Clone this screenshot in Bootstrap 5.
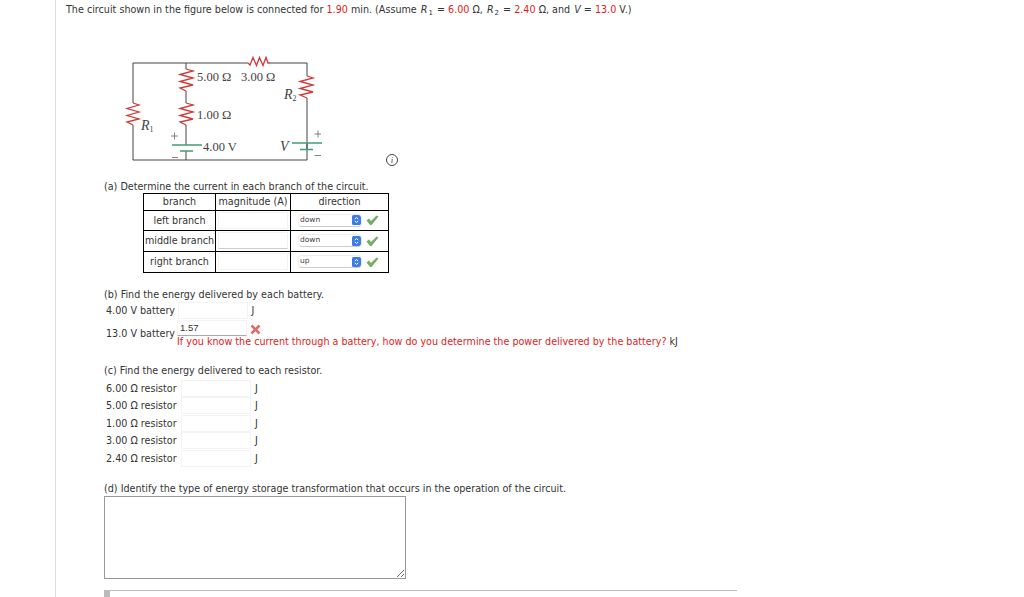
<!DOCTYPE html>
<html lang="en">
<head>
<meta charset="utf-8">
<title>Circuit problem</title>
<link href="https://cdn.jsdelivr.net/npm/bootstrap@5.3.0/dist/css/bootstrap.min.css" rel="stylesheet">
<style>
html,body{height:597px;overflow:hidden;background:#fff}
body{font:9.6px/1.2 "DejaVu Sans",Verdana,sans-serif;color:#333}
.pane{margin-left:55px;height:597px;border-left:1px solid #ddd;padding-left:10px;position:relative}
.pane p{margin:0}
.intro{padding-top:4px;height:50px}
.intro sub{margin:0 1px;font-size:7px}
.intro i{margin-left:1px}
.val{color:#e01b1b}
.fig{display:block;margin-left:54px;width:280px;height:122px}
.fig text{font-family:"Liberation Serif",serif;font-size:12.5px;fill:#444}
.fig .rlab{font-size:14px;font-style:italic}
.sect{margin-left:38px}
.qa{margin-top:8.5px}
.grid-t{margin:.5px 0 0 39px;width:245px;table-layout:fixed;border-collapse:collapse;color:#333}
.grid-t td{border:1px solid #000;padding:0;text-align:center;vertical-align:middle;background:#fff;line-height:1}
.grid-t .namec{padding-top:1px}
.hd td{height:17px}.r1 td{height:20px}.r2 td{height:21px}
.cellin{display:block;width:70px;height:17px;margin:0 auto;padding:0;border:1px solid #f3f3f3;border-radius:0}
.r2 .cellin{border-bottom-color:#ccc}
.r2.endrow .cellin{border-bottom-color:#f3f3f3}
.dirbox{padding-left:7px}
.pick{width:64px;height:13px;padding:0 0 2px 1px;font:7.5px/10px "DejaVu Sans",sans-serif;color:#444;border:1px solid #eee;border-bottom:1px solid #ccc;border-radius:4px;min-height:0;
background-size:9px 10px;background-position:right 0 center;background-image:url("data:image/svg+xml,%3Csvg xmlns='http://www.w3.org/2000/svg' viewBox='0 0 9 10'%3E%3Crect width='9' height='10' rx='1.5' fill='%233b7ce6'/%3E%3Cpath d='M2.8 4 4.500 2.600 6.200 4M2.800 6 4.500 7.400 6.200 6' fill='none' stroke='%23fff' stroke-width='1'/%3E%3C/svg%3E")}
.qb{margin-top:16px}
.rowline{height:17.5px}
.lab{white-space:nowrap}
.ans{width:70px;height:17px;padding:0 0 0 2px;font:9.5px/1 "Liberation Sans",sans-serif;color:#333;border:1px solid #f3f3f3;border-radius:0;min-height:0}
.unit{margin-left:3.5px}
.b1{margin-top:2px}
.b1 .lab{margin-left:2px;width:72px}
.b2{height:16px}
.b2 .lab{margin-left:2px;width:71px;margin-top:8px}
.b2 .ans{border-bottom-color:#aaa;height:16px}
.xmark{margin:4px 0 0 3px}
.pane .hint{color:#e01b1b;margin-left:73px;margin-top:.5px;white-space:nowrap}
.hint span{color:#333}
.qc{margin-top:17.5px}
.c1 .lab{width:75px;margin-left:2px}
.c1 .unit{margin-left:4px}
.cfirst{margin-top:3px}
.qd{margin-top:16px}
.essay{display:block;width:302px;height:83px;margin-top:1.5px;border:1px solid #999;border-radius:0;padding:2px;min-height:0}
.foot{position:absolute;left:48px;top:590px;width:633px;height:7px;border-top:1px solid #bbb}
.foot i{display:block;width:6px;height:7px;background:#bbb}
</style>
</head>
<body>
<div class="pane">
  <p class="intro">The circuit shown in the figure below is connected for <span class="val">1.90</span> min. (Assume <i>R</i><sub>1</sub> = <span class="val">6.00</span> Ω, <i>R</i><sub>2</sub> = <span class="val">2.40</span> Ω, and <i>V</i> = <span class="val">13.0</span> V.)</p>

  <svg class="fig" viewBox="120 50 280 122" aria-label="Circuit diagram">
    <path d="M133 103V63H248M270 63H307V76M307 98V160H133V125M186 63V69M186 91V103M186 125V145M186 151V160M307 143V149" fill="none" stroke="#444" stroke-width="1"/>
    <g fill="none" stroke="#cf3a3a" stroke-width="1.3">
      <path d="M248 63 250 65 253 57.5 256.500 65.500 259.500 57.500 263 65.500 266 57.500 268 63 270 63"/>
      <path d="M133 103 139 105 127 108.500 139 112 127 115.500 139 119 127 122 133 125"/>
      <path d="M186 69 193 71 180 74.500 193 78 180 81.500 193 85 180 88 186 91"/>
      <path d="M186 103 193 105 180 108.500 193 112 180 115.500 193 119 180 122 186 125"/>
      <path d="M307 76 313 78 300 81.500 313 85 300 88.500 313 92 300 95 307 98"/>
    </g>
    <g stroke="#3f9d78" stroke-width="1.3">
      <path d="M172 145H202M180 151H193M292 143H322M300 149.500H313"/>
    </g>
    <path d="M171 136H178M174.500 132.500V139.500M172 157.500H178M314.500 134H321M318 130.500V137.500M314.500 155.500H321" stroke="#666" stroke-width=".8"/>
    <text x="197" y="81">5.00 Ω</text>
    <text x="241" y="81">3.00 Ω</text>
    <text x="197" y="119">1.00 Ω</text>
    <text x="203" y="151">4.00 V</text>
    <text x="280" y="151" class="rlab">V</text>
    <text x="284" y="99" class="rlab">R<tspan style="font-size:8px;font-style:normal" dy="2">2</tspan></text>
    <text x="141" y="130" class="rlab">R<tspan style="font-size:8px;font-style:normal" dy="2">1</tspan></text>
    <circle cx="392" cy="160" r="5.500" fill="#fff" stroke="#444" stroke-width="1"/>
    <text x="392" y="163" text-anchor="middle" font-style="italic" style="font-size:9px">i</text>
  </svg>

  <div class="sect qa">
    <p>(a) Determine the current in each branch of the circuit.</p>
    <table class="grid-t">
      <colgroup><col style="width:72px"><col style="width:75px"><col style="width:98px"></colgroup>
      <tr class="hd"><td>branch</td><td>magnitude (A)</td><td>direction</td></tr>
      <tr class="r1"><td class="namec">left branch</td><td><input class="form-control cellin" type="text" aria-label="left"></td>
        <td><div class="d-flex align-items-center dirbox gap-1"><select class="form-select pick" aria-label="left direction"><option>down</option></select><svg width="13" height="10" viewBox="0 0 13 10"><path d="M.5 5.500 3 3.500 5 6 10.500 .5 12.500 1.500 5.500 10H4Z" fill="#74ad66"/></svg></div></td></tr>
      <tr class="r2"><td class="namec">middle branch</td><td><input class="form-control cellin" type="text" aria-label="middle"></td>
        <td><div class="d-flex align-items-center dirbox gap-1"><select class="form-select pick" aria-label="middle direction"><option>down</option></select><svg width="13" height="10" viewBox="0 0 13 10"><path d="M.5 5.500 3 3.500 5 6 10.500 .5 12.500 1.500 5.500 10H4Z" fill="#74ad66"/></svg></div></td></tr>
      <tr class="r2 endrow"><td class="namec">right branch</td><td><input class="form-control cellin" type="text" aria-label="right"></td>
        <td><div class="d-flex align-items-center dirbox gap-1"><select class="form-select pick" aria-label="right direction"><option>up</option></select><svg width="13" height="10" viewBox="0 0 13 10"><path d="M.5 5.500 3 3.500 5 6 10.500 .5 12.500 1.500 5.500 10H4Z" fill="#74ad66"/></svg></div></td></tr>
    </table>
  </div>

  <div class="sect qb">
    <p>(b) Find the energy delivered by each battery.</p>
    <div class="d-flex align-items-center rowline b1"><span class="lab">4.00 V battery</span><input class="form-control ans" type="text" aria-label="4.00 V battery"><span class="unit">J</span></div>
    <div class="d-flex b2"><span class="lab">13.0 V battery</span><input class="form-control ans" type="text" value="1.57" aria-label="13.0 V battery"><svg class="xmark" width="11" height="11" viewBox="0 0 11 11"><path d="M1.500 1.500 9.500 9.500M9.500 1.500 1.500 9.500" stroke="#e06a66" stroke-width="2.600"/></svg></div>
    <p class="hint">If you know the current through a battery, how do you determine the power delivered by the battery? <span>kJ</span></p>
  </div>

  <div class="sect qc">
    <p>(c) Find the energy delivered to each resistor.</p>
    <div class="d-flex align-items-center rowline c1 cfirst"><span class="lab">6.00 Ω resistor</span><input class="form-control ans" type="text" aria-label="6.00 ohm"><span class="unit">J</span></div>
    <div class="d-flex align-items-center rowline c1"><span class="lab">5.00 Ω resistor</span><input class="form-control ans" type="text" aria-label="5.00 ohm"><span class="unit">J</span></div>
    <div class="d-flex align-items-center rowline c1"><span class="lab">1.00 Ω resistor</span><input class="form-control ans" type="text" aria-label="1.00 ohm"><span class="unit">J</span></div>
    <div class="d-flex align-items-center rowline c1"><span class="lab">3.00 Ω resistor</span><input class="form-control ans" type="text" aria-label="3.00 ohm"><span class="unit">J</span></div>
    <div class="d-flex align-items-center rowline c1"><span class="lab">2.40 Ω resistor</span><input class="form-control ans" type="text" aria-label="2.40 ohm"><span class="unit">J</span></div>
  </div>

  <div class="sect qd">
    <p>(d) Identify the type of energy storage transformation that occurs in the operation of the circuit.</p>
    <textarea class="form-control essay" aria-label="answer"></textarea>
  </div>

  <div class="foot"><i></i></div>
</div>
<script src="https://cdn.jsdelivr.net/npm/bootstrap@5.3.0/dist/js/bootstrap.bundle.min.js"></script>
</body>
</html>
